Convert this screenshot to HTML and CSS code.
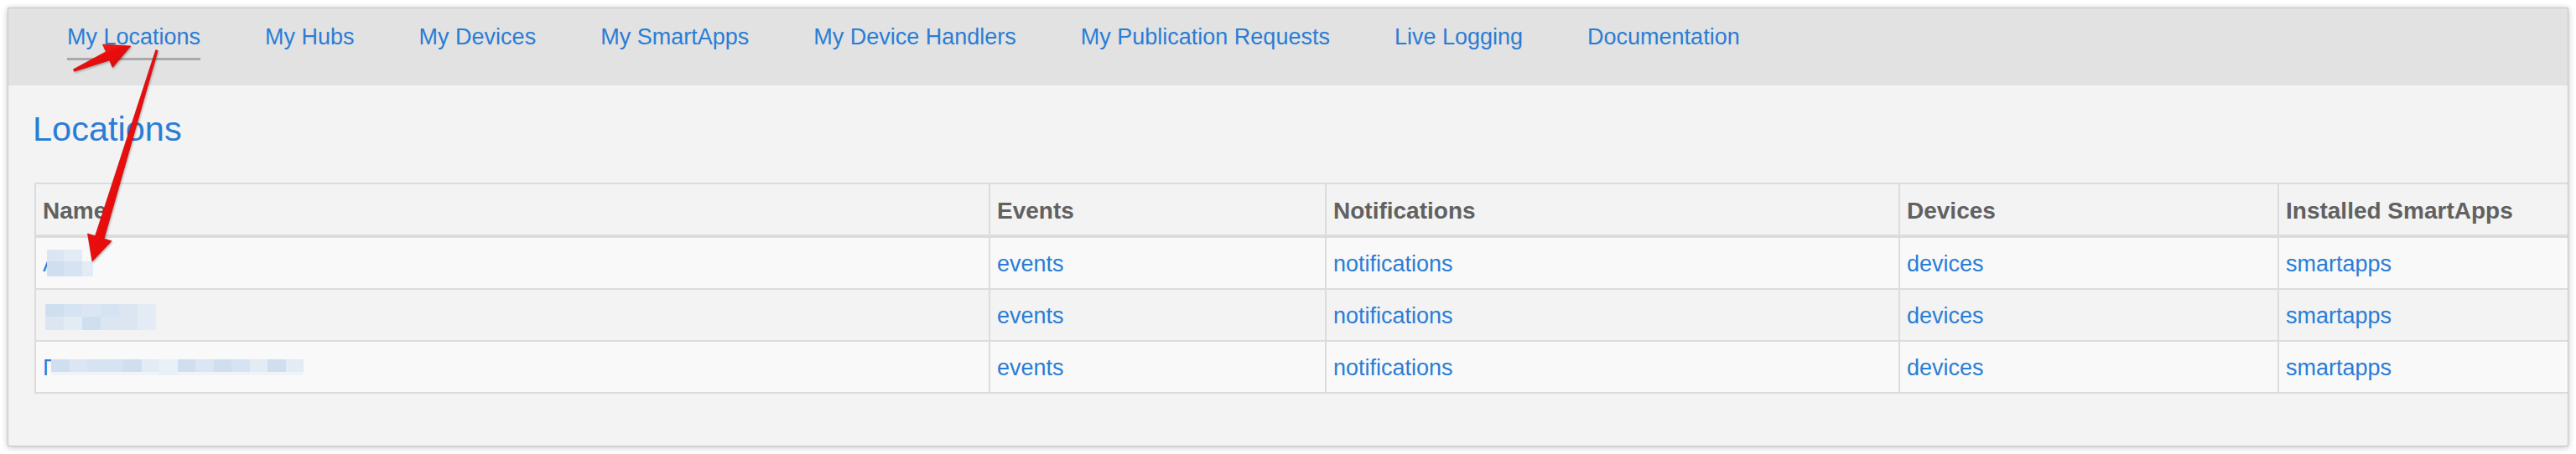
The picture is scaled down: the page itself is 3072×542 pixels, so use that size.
FILE: index.html
```html
<!DOCTYPE html>
<html lang="en">
<head>
<meta charset="utf-8">
<title>My Locations</title>
<link rel="stylesheet" href="styles.css">
</head>
<body>
<div class="window">
  <nav class="nav">
    <a class="nav-item active" href="#">My Locations</a>
    <a class="nav-item" href="#">My Hubs</a>
    <a class="nav-item" href="#">My Devices</a>
    <a class="nav-item" href="#">My SmartApps</a>
    <a class="nav-item" href="#">My Device Handlers</a>
    <a class="nav-item" href="#">My Publication Requests</a>
    <a class="nav-item" href="#">Live Logging</a>
    <a class="nav-item" href="#">Documentation</a>
  </nav>
  <main class="content">
    <h1 class="title">Locations</h1>
    <table class="loc-table">
      <thead>
        <tr>
          <th class="c-name">Name</th>
          <th class="c-events">Events</th>
          <th class="c-notif">Notifications</th>
          <th class="c-devices">Devices</th>
          <th class="c-apps">Installed SmartApps</th>
        </tr>
      </thead>
      <tbody>
        <tr class="row-light">
          <td class="name-cell"><a class="link" href="#">A</a>
            <span class="mosaic mosaic-1">
              <i class="s3"></i><i class="s4"></i><i class="s0"></i>
              <i class="s1"></i><i class="s2"></i><i class="s4"></i>
            </span>
          </td>
          <td><a class="link" href="#">events</a></td>
          <td><a class="link" href="#">notifications</a></td>
          <td><a class="link" href="#">devices</a></td>
          <td><a class="link" href="#">smartapps</a></td>
        </tr>
        <tr class="row-dark">
          <td class="name-cell">
            <span class="mosaic mosaic-2">
              <i class="s1"></i><i class="s2"></i><i class="s3"></i><i class="s2"></i><i class="s3"></i><i class="s4"></i>
              <i class="s3"></i><i class="s4"></i><i class="s1"></i><i class="s3"></i><i class="s3"></i><i class="s4"></i>
            </span>
          </td>
          <td><a class="link" href="#">events</a></td>
          <td><a class="link" href="#">notifications</a></td>
          <td><a class="link" href="#">devices</a></td>
          <td><a class="link" href="#">smartapps</a></td>
        </tr>
        <tr class="row-light">
          <td class="name-cell"><a class="link" href="#">Г</a>
            <span class="mosaic mosaic-3">
              <i class="s1"></i><i class="s3"></i><i class="s2"></i><i class="s2"></i><i class="s1"></i><i class="s4"></i><i class="s5"></i>
              <i class="s1"></i><i class="s3"></i><i class="s1"></i><i class="s2"></i><i class="s4"></i><i class="s1"></i><i class="s4"></i>
              <i class="s6"></i><i class="s6"></i><i class="s6"></i><i class="s6"></i><i class="s6"></i><i class="s6"></i><i class="s5"></i>
              <i class="s6"></i><i class="s6"></i><i class="s6"></i><i class="s6"></i><i class="s6"></i><i class="s6"></i><i class="s6"></i>
            </span>
          </td>
          <td><a class="link" href="#">events</a></td>
          <td><a class="link" href="#">notifications</a></td>
          <td><a class="link" href="#">devices</a></td>
          <td><a class="link" href="#">smartapps</a></td>
        </tr>
      </tbody>
    </table>
  </main>
</div>

<svg class="annotations" width="3072" height="542" viewBox="0 0 3072 542" aria-hidden="true">
  <defs>
    <linearGradient id="redgrad" x1="0" y1="0" x2="1" y2="1">
      <stop offset="0" stop-color="#ff1f1f"/>
      <stop offset="1" stop-color="#d40000"/>
    </linearGradient>
    <filter id="arrowshadow" x="-20%" y="-20%" width="140%" height="140%">
      <feDropShadow dx="1" dy="1.5" stdDeviation="1.2" flood-color="#000" flood-opacity="0.3"/>
    </filter>
  </defs>
  <polygon class="arrow" points="87.5,82.8 126.4,61.7 122.5,53 156,55 134.3,80.6 130.6,71.9 88.5,85.2"/>
  <polygon class="arrow" points="185.8,59.6 113.5,281.7 104.5,278.9 110,312 133.1,287.7 124.1,284.9 188.2,60.4"/>
</svg>
</body>
</html>
```

FILE: styles.css
```css
html, body {
  margin: 0;
  padding: 0;
}

body {
  position: relative;
  width: 3072px;
  height: 542px;
  overflow: hidden;
  background: #ffffff;
  font-family: "Liberation Sans", Arial, sans-serif;
}

.window {
  margin: 9px 0 0 9px;
  width: 3054px;
  height: 524px;
  box-sizing: border-box;
  border: 1px solid #c6c6c6;
  box-shadow: 0 1px 7px rgba(0, 0, 0, 0.25);
  background: #f3f3f3;
  overflow: hidden;
}

/* top navigation */
.nav {
  display: flex;
  align-items: flex-start;
  gap: 77px;
  height: 92px;
  box-sizing: border-box;
  padding: 19px 0 0 70px;
  background: #e2e2e2;
}

.nav-item {
  font-size: 27px;
  line-height: 31px;
  color: #2a7dd5;
  text-decoration: none;
  white-space: nowrap;
}

.nav-item.active {
  padding-bottom: 9px;
  border-bottom: 3px solid #a9a9a9;
}

/* content */
.content {
  padding: 28px 0 0 31px;
}

.title {
  margin: 0 0 41px -2px;
  font-size: 41.5px;
  line-height: 47px;
  font-weight: normal;
  color: #2a7dd5;
}

.loc-table {
  border-collapse: separate;
  border-spacing: 0;
  table-layout: fixed;
  width: 3100px;
  border: 2px solid #dcdcdc;
  border-right: 0;
}

.loc-table th,
.loc-table td {
  padding: 3px 8px 0;
  box-sizing: border-box;
  text-align: left;
  vertical-align: middle;
  white-space: nowrap;
  line-height: 31px;
  border-left: 2px solid #dcdcdc;
  border-bottom: 2px solid #dcdcdc;
}

.loc-table th {
  height: 64px;
  font-size: 28px;
  font-weight: bold;
  color: #616161;
  background: #f3f3f3;
  border-bottom-width: 4px;
}

.loc-table td {
  height: 62px;
  font-size: 27px;
}

.loc-table th:first-child,
.loc-table td:first-child {
  border-left: 0;
}

.loc-table tbody tr:last-child td {
  height: 60px;
  border-bottom: 0;
}

.c-name { width: 1136px; }
.c-events { width: 401px; }
.c-notif { width: 684px; }
.c-devices { width: 452px; }
.c-apps { width: 425px; }

.row-light td { background: #f9f9f9; }
.row-dark td { background: #f3f3f3; }

.link {
  color: #2a7dd5;
  text-decoration: none;
}

/* pixelated (blurred) location names */
.name-cell {
  position: relative;
}

.mosaic {
  position: absolute;
  display: grid;
}

.mosaic i {
  display: block;
}

.mosaic-1 {
  left: 13px;
  top: 14px;
  grid-template-columns: 20px 22px 13px;
  grid-template-rows: 14px 18px;
}

.mosaic-2 {
  left: 11px;
  top: 17px;
  grid-template-columns: repeat(6, 22px);
  grid-template-rows: 15px 16px;
}

.mosaic-3 {
  left: 18px;
  top: 21px;
  grid-template-columns: repeat(14, 21.5px);
  grid-template-rows: 15px 4px;
}

.s0 { background: transparent; }
.s1 { background: #cfdff0; }
.s2 { background: #d6e3f2; }
.s3 { background: #dce6f2; }
.s4 { background: #e3ebf5; }
.s5 { background: #eaf0f7; }
.s6 { background: #f0f3f8; }

/* red annotation arrows drawn over the screenshot */
.annotations {
  position: absolute;
  left: 0;
  top: 0;
  pointer-events: none;
}

.arrow {
  fill: url(#redgrad);
  stroke: #c00000;
  stroke-width: 0.6;
  stroke-linejoin: round;
  filter: url(#arrowshadow);
}
```
